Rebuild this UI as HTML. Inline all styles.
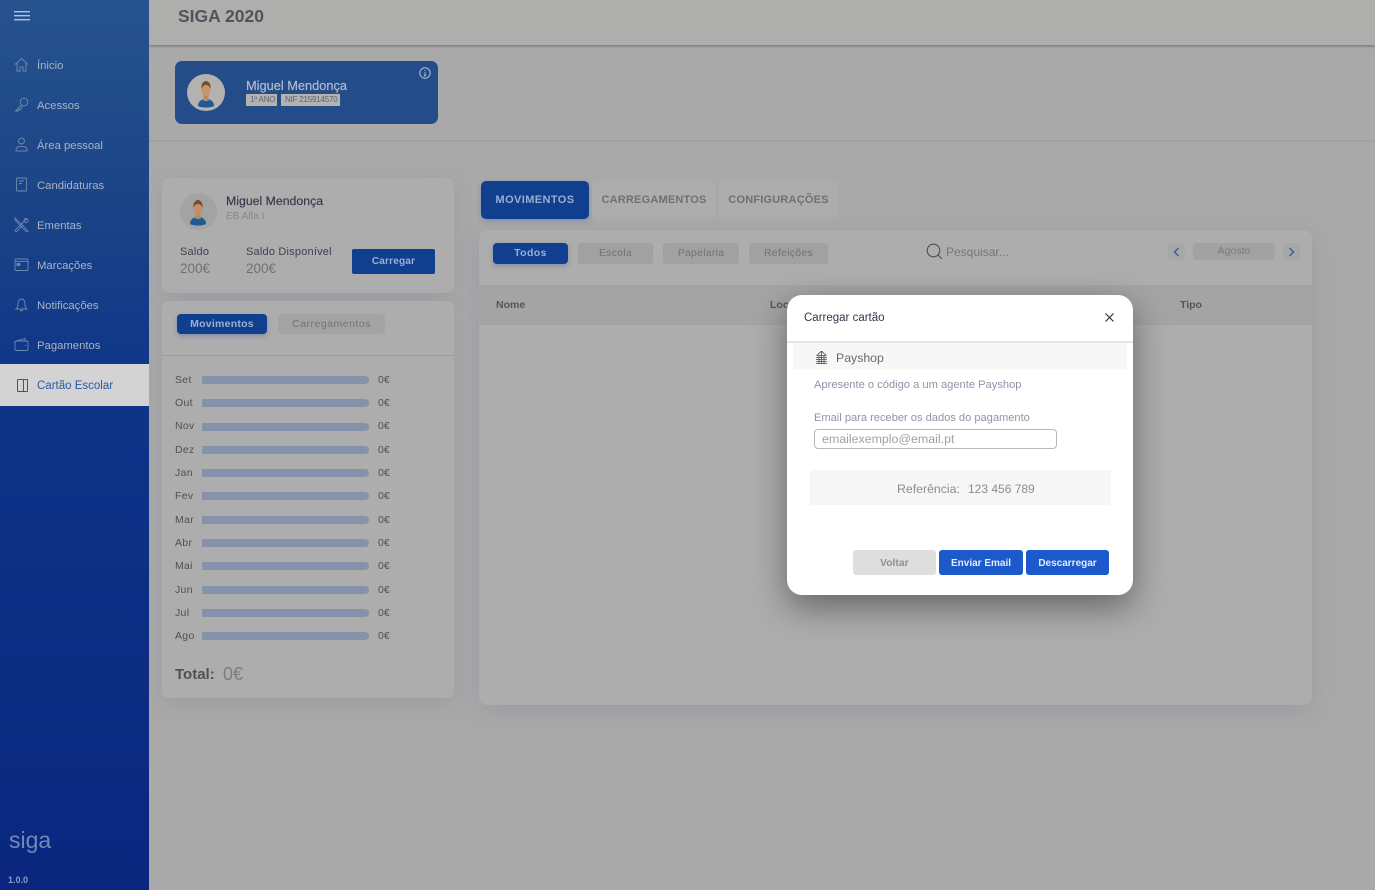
<!DOCTYPE html>
<html lang="pt"><head><meta charset="utf-8"><title>SIGA 2020</title>
<style>
*{box-sizing:border-box}
html,body{margin:0;padding:0;width:1375px;height:890px;overflow:hidden;background:#a9a9aa;font-family:"Liberation Sans",sans-serif}
.a{position:absolute}
.t{position:absolute;white-space:nowrap;line-height:1}
#side{position:absolute;left:0;top:0;width:149px;height:890px;background:linear-gradient(180deg,#26538e 0,#1b4487 200px,#0e3488 400px,#0a267e 890px)}
.mi{position:absolute;left:37px;font-size:11.3px;color:#aab3c5;white-space:nowrap;line-height:14px}
.ic{position:absolute;left:14px;width:15px;height:15px;fill:none;stroke:#7189ad;stroke-width:.9}
.mo{left:175px;font-size:10.5px;color:#4f4f55;letter-spacing:.3px}
.ev{left:378px;font-size:10.5px;color:#4f4f55}
.bar{position:absolute;left:202px;width:167px;height:8px;background:#8691aa;border-radius:0 4px 4px 0}
.pill{position:absolute;height:21px;background:#a1a1a2;border-radius:3px;text-align:center;line-height:20px;font-size:10.5px;color:#727276;letter-spacing:.25px}
</style></head><body>

<div class="a" style="left:149px;top:0;width:1226px;height:45px;background:#aeaead;box-shadow:0 1px 3px rgba(0,0,0,.35)"></div>
<div class="t" style="left:178px;top:8px;font-size:17.5px;font-weight:bold;color:#53535b">SIGA 2020</div>
<div class="a" style="left:149px;top:140px;width:1226px;height:2px;background:#a1a1a2"></div>

<div class="a" style="left:175px;top:61px;width:263px;height:63px;background:#234c88;border-radius:7px"></div>
<div class="a" style="left:187px;top:74px;width:38px;height:37px;border-radius:50%;background:#b4b2ae"></div>
<svg class="a" style="left:187px;top:74px" width="38" height="37" viewBox="0 0 38 37"><path d="M11 32c0-5 4-7 8-7s8 2 8 7c-3 2-13 2-16 0z" fill="#1c5a98"/><rect x="16.5" y="20" width="5" height="7" fill="#b98a66"/><ellipse cx="19" cy="16" rx="4.5" ry="6" fill="#c59572"/><path d="M14.5 15c-1-6 3-8 4.500-8s5.500 2 4.500 8c-1-3-2.500-4-4.500-4s-3.500 1-4.500 4z" fill="#7e4a26"/></svg>
<div class="t" style="left:246px;top:80px;font-size:12.8px;color:#aebbd2;-webkit-text-stroke:.2px #aebbd2">Miguel Mendonça</div>
<div class="a" style="left:246px;top:94px;width:31px;height:12px;background:#b3b3b0"></div>
<div class="t" style="left:250px;top:96px;font-size:8px;color:#5a6078;letter-spacing:-.2px">1º ANO</div>
<div class="a" style="left:281px;top:94px;width:59px;height:12px;background:#b3b3b0"></div>
<div class="t" style="left:285px;top:96px;font-size:8px;color:#5a6078;letter-spacing:-.2px">NIF 215914570</div>
<svg class="a" style="left:419px;top:67px" width="12" height="12" viewBox="0 0 12 12" fill="none" stroke="#b6c2d6"><circle cx="6" cy="6" r="5.2"/><path d="M6 5.2v3.6M4.8 8.8h2.4M6 3v1"/></svg>

<!-- saldo card -->
<div class="a" style="left:162px;top:178px;width:292px;height:115px;background:#adadad;border-radius:7px;box-shadow:0 6px 22px rgba(80,84,110,.14)"></div>
<div class="a" style="left:180px;top:193px;width:37px;height:37px;border-radius:50%;background:#a3a3a3"></div>
<svg class="a" style="left:180px;top:193px" width="37" height="37" viewBox="0 0 37 37"><path d="M10 31c0-5 4-7 8-7s8 2 8 7c-3 2-13 2-16 0z" fill="#1c5a98"/><rect x="15.5" y="20" width="5" height="6" fill="#b98a66"/><ellipse cx="18" cy="16" rx="4.5" ry="6" fill="#c0906c"/><path d="M13.5 15c-1-6 3-8 4.500-8s5.500 2 4.500 8c-1-3-2.500-4-4.500-4s-3.500 1-4.500 4z" fill="#7e4a26"/></svg>
<div class="t" style="left:226px;top:195px;font-size:12.3px;color:#33384c;-webkit-text-stroke:.15px #33384c">Miguel Mendonça</div>
<div class="t" style="left:226px;top:212px;font-size:10px;color:#87878c">EB Alfa I</div>
<div class="t" style="left:180px;top:247px;font-size:11px;color:#3d4050;letter-spacing:.2px">Saldo</div>
<div class="t" style="left:246px;top:247px;font-size:11px;color:#3d4050;letter-spacing:.2px">Saldo Disponível</div>
<div class="t" style="left:180px;top:262px;font-size:13.5px;color:#717175">200€</div>
<div class="t" style="left:246px;top:262px;font-size:13.5px;color:#717175">200€</div>
<div class="a" style="left:352px;top:249px;width:83px;height:25px;background:#103f8f;border-radius:2px;text-align:center;line-height:26px;font-size:10px;font-weight:bold;color:#9fb0cf;letter-spacing:.2px">Carregar</div>

<!-- month card -->
<div class="a" style="left:162px;top:301px;width:292px;height:397px;background:#adadad;border-radius:7px;box-shadow:0 6px 22px rgba(80,84,110,.14)"></div>
<div class="a" style="left:177px;top:314px;width:90px;height:20px;background:#103f8f;border-radius:4px;box-shadow:0 2px 5px rgba(20,70,160,.3);text-align:center;line-height:20px;font-size:10.5px;font-weight:bold;color:#9db0d0;letter-spacing:.25px">Movimentos</div>
<div class="a" style="left:278px;top:314px;width:107px;height:20px;background:#a4a4a5;border-radius:4px;text-align:center;line-height:20px;font-size:10.5px;color:#727276;letter-spacing:.5px">Carregamentos</div>
<div class="a" style="left:162px;top:355px;width:292px;height:1px;background:#9c9c9c"></div>

<div class="t mo" style="top:375px">Set</div><div class="bar" style="top:376px"></div><div class="t ev" style="top:375px">0€</div>
<div class="t mo" style="top:398px">Out</div><div class="bar" style="top:399px"></div><div class="t ev" style="top:398px">0€</div>
<div class="t mo" style="top:421px">Nov</div><div class="bar" style="top:423px"></div><div class="t ev" style="top:421px">0€</div>
<div class="t mo" style="top:445px">Dez</div><div class="bar" style="top:446px"></div><div class="t ev" style="top:445px">0€</div>
<div class="t mo" style="top:468px">Jan</div><div class="bar" style="top:469px"></div><div class="t ev" style="top:468px">0€</div>
<div class="t mo" style="top:491px">Fev</div><div class="bar" style="top:492px"></div><div class="t ev" style="top:491px">0€</div>
<div class="t mo" style="top:515px">Mar</div><div class="bar" style="top:516px"></div><div class="t ev" style="top:515px">0€</div>
<div class="t mo" style="top:538px">Abr</div><div class="bar" style="top:539px"></div><div class="t ev" style="top:538px">0€</div>
<div class="t mo" style="top:561px">Mai</div><div class="bar" style="top:562px"></div><div class="t ev" style="top:561px">0€</div>
<div class="t mo" style="top:585px">Jun</div><div class="bar" style="top:586px"></div><div class="t ev" style="top:585px">0€</div>
<div class="t mo" style="top:608px">Jul</div><div class="bar" style="top:609px"></div><div class="t ev" style="top:608px">0€</div>
<div class="t mo" style="top:631px">Ago</div><div class="bar" style="top:632px"></div><div class="t ev" style="top:631px">0€</div>
<div class="t" style="left:175px;top:667px;font-size:15px;font-weight:bold;color:#505056">Total:</div>
<div class="t" style="left:223px;top:665px;font-size:18px;color:#7c7c80">0€</div>

<!-- tabs -->
<div class="a" style="left:481px;top:181px;width:108px;height:38px;background:#103f8f;border-radius:5px;box-shadow:0 2px 6px rgba(20,70,160,.25);text-align:center;line-height:38px;font-size:11px;font-weight:bold;color:#9cafcf;letter-spacing:.4px">MOVIMENTOS</div>
<div class="a" style="left:592px;top:181px;width:124px;height:38px;background:#adadad;border-radius:5px;text-align:center;line-height:38px;font-size:11px;font-weight:bold;color:#6f6f75;letter-spacing:.2px">CARREGAMENTOS</div>
<div class="a" style="left:719px;top:181px;width:119px;height:38px;background:#adadad;border-radius:5px;text-align:center;line-height:38px;font-size:11px;font-weight:bold;color:#6f6f75;letter-spacing:.2px">CONFIGURAÇÕES</div>

<!-- main panel -->
<div class="a" style="left:479px;top:230px;width:833px;height:475px;background:#adadad;border-radius:8px;box-shadow:0 6px 22px rgba(80,84,110,.16)"></div>
<div class="a" style="left:479px;top:285px;width:833px;height:40px;background:#a4a4a4"></div>
<div class="a" style="left:493px;top:243px;width:75px;height:21px;background:#103f8f;border-radius:4px;box-shadow:0 2px 5px rgba(20,70,160,.3);text-align:center;line-height:20px;font-size:10.5px;font-weight:bold;color:#9db0d0;letter-spacing:.4px">Todos</div>
<div class="pill" style="left:578px;top:243px;width:75px">Escola</div>
<div class="pill" style="left:663px;top:243px;width:76px">Papelaria</div>
<div class="pill" style="left:749px;top:243px;width:79px">Refeições</div>
<svg class="a" style="left:926px;top:243px" width="18" height="18" viewBox="0 0 18 18" fill="none" stroke="#4f4f52" stroke-width="1.1"><circle cx="7.5" cy="7.5" r="6.3"/><path d="M12 12l4 4"/></svg>
<div class="t" style="left:946px;top:246px;font-size:12px;color:#77777b">Pesquisar...</div>
<div class="a" style="left:1168px;top:243px;width:17px;height:17px;background:#a6a7a9;border-radius:3px"></div>
<svg class="a" style="left:1168px;top:243px" width="17" height="17" viewBox="0 0 17 17" fill="none" stroke="#3b5a92" stroke-width="1.4"><path d="M10.5 5l-4 4 4 4"/></svg>
<div class="a" style="left:1193px;top:243px;width:82px;height:17px;background:#a2a2a3;border-radius:3px;text-align:center;line-height:16px;font-size:10.5px;color:#7a7a7f">Agosto</div>
<div class="a" style="left:1283px;top:243px;width:17px;height:17px;background:#a6a7a9;border-radius:3px"></div>
<svg class="a" style="left:1283px;top:243px" width="17" height="17" viewBox="0 0 17 17" fill="none" stroke="#3b5a92" stroke-width="1.4"><path d="M6.5 5l4 4-4 4"/></svg>
<div class="t" style="left:496px;top:300px;font-size:10.5px;font-weight:bold;color:#55555d">Nome</div>
<div class="t" style="left:770px;top:300px;font-size:10.5px;font-weight:bold;color:#55555d">Local</div>
<div class="t" style="left:1180px;top:300px;font-size:10.5px;font-weight:bold;color:#55555d">Tipo</div>

<!-- sidebar -->
<div id="side">
<svg class="a" style="left:14px;top:11px" width="16" height="11" viewBox="0 0 16 11" stroke="#b6c2d6" stroke-width="1.4"><path d="M0 .7h16M0 4.700h16M0 8.700h16"/></svg>
<div class="a" style="left:0;top:44px;width:149px;height:1px;background:#275090"></div>

<svg class="ic" style="top:57px" viewBox="0 0 15 15"><path d="M1 7.5L7.500 1.500 14 7.500M3 6v8h3v-4h3v4h3V6"/></svg>
<div class="mi" style="top:59px">Ínicio</div>
<svg class="ic" style="top:97px" viewBox="0 0 15 15"><circle cx="10" cy="5" r="3.8"/><path d="M7.5 8L1.500 14h2.500l1-1.500 1 .5 2.500-3.500"/></svg>
<div class="mi" style="top:99px">Acessos</div>
<svg class="ic" style="top:137px" viewBox="0 0 15 15"><circle cx="7.5" cy="4" r="3"/><path d="M2 14v-1.500c0-2 2-3 5.500-3s5.500 1 5.500 3V14z"/></svg>
<div class="mi" style="top:139px">Área pessoal</div>
<svg class="ic" style="top:177px" viewBox="0 0 15 15"><rect x="2.5" y="1" width="10" height="13" rx="1"/><path d="M5 4h5M5 6.500h3"/></svg>
<div class="mi" style="top:179px">Candidaturas</div>
<svg class="ic" style="top:217px" viewBox="0 0 15 15"><path d="M1 1l13 13-1.500 1L1 3zM13 1.500L1 13.500 2.500 15 9 8"/><circle cx="12" cy="3.5" r="2"/></svg>
<div class="mi" style="top:219px">Ementas</div>
<svg class="ic" style="top:257px" viewBox="0 0 15 15"><rect x="1" y="2" width="13" height="11.5" rx="1"/><path d="M1 4.500h13"/><rect x="3" y="6.5" width="3" height="2" fill="#7189ad"/></svg>
<div class="mi" style="top:259px">Marcações</div>
<svg class="ic" style="top:297px" viewBox="0 0 15 15"><path d="M2 12h11c-1.500-1-2-2.500-2-5 0-3-1.500-5-3.500-5S4 4 4 7c0 2.500-.5 4-2 5zM6 13.500h3"/></svg>
<div class="mi" style="top:299px">Notificações</div>
<svg class="ic" style="top:337px" viewBox="0 0 15 15"><path d="M2 4l9-2.500V4"/><rect x="1" y="4" width="13" height="9.5" rx="1.5"/><path d="M11 8.500h1"/></svg>
<div class="mi" style="top:339px">Pagamentos</div>
<div class="a" style="left:0;top:364px;width:149px;height:42px;background:#d3d3d3"></div>
<svg class="a" style="left:17px;top:379px" width="11" height="13" viewBox="0 0 11 13" fill="none" stroke="#2a58a8" stroke-width="1"><rect x=".5" y=".5" width="10" height="12" rx=".5"/><path d="M6.500 .5v12"/></svg>
<div class="mi" style="top:379px;color:#2a58a8;font-size:11.5px">Cartão Escolar</div>
<div class="t" style="left:9px;top:829px;font-size:23px;color:#7388b8">siga</div>
<div class="t" style="left:8px;top:876px;font-size:9px;font-weight:bold;color:#8b9cc4">1.0.0</div>
</div>

<!-- modal -->
<div class="a" style="left:787px;top:295px;width:346px;height:300px;background:#fff;border-radius:15px;box-shadow:0 12px 34px rgba(0,0,0,.42)"></div>
<div class="t" style="left:804px;top:313px;font-size:11.5px;color:#343848">Carregar cartão</div>
<svg class="a" style="left:1104px;top:312px" width="11" height="11" viewBox="0 0 11 11" stroke="#2c2c30" stroke-width="1.1"><path d="M1.500 1.500l8 8M9.500 1.500l-8 8"/></svg>
<div class="a" style="left:787px;top:341px;width:346px;height:2px;background:#e4e4e6"></div>
<div class="a" style="left:793px;top:343px;width:334px;height:26px;background:#f7f7f8"></div>
<svg class="a" style="left:815px;top:351px" width="13" height="13" viewBox="0 0 13 13" stroke="#4a4a4e" stroke-width=".8" fill="none"><path d="M6.500 0L2 4.500h9zM1 6.500h11M1 8.500h11M1 10.500h11M1 12.500h11M4 5v8M6.500 0v13M9 5v8"/></svg>
<div class="t" style="left:836px;top:352px;font-size:12.3px;color:#6a6a70">Payshop</div>
<div class="t" style="left:814px;top:380px;font-size:11.15px;color:#8f93a6">Apresente o código a um agente Payshop</div>
<div class="t" style="left:814px;top:413px;font-size:11.1px;color:#8f93a6">Email para receber os dados do pagamento</div>
<div class="a" style="left:814px;top:429px;width:243px;height:20px;border:1px solid #b8b8bc;border-radius:4px;background:#fff"></div>
<div class="t" style="left:822px;top:433px;font-size:12.4px;color:#a0a0a6">emailexemplo@email.pt</div>
<div class="a" style="left:810px;top:470px;width:301px;height:35px;background:#f6f6f7;border-radius:2px"></div>
<div class="t" style="left:897px;top:483px;font-size:12.3px;color:#8c8c94">Referência:</div>
<div class="t" style="left:968px;top:483px;font-size:12px;color:#8c8c94">123 456 789</div>
<div class="a" style="left:853px;top:550px;width:83px;height:25px;background:#dedede;border-radius:3px;text-align:center;line-height:27px;font-size:10px;font-weight:bold;color:#8e8e92;letter-spacing:.2px">Voltar</div>
<div class="a" style="left:939px;top:550px;width:84px;height:25px;background:#1c59cb;border-radius:3px;text-align:center;line-height:27px;font-size:10px;font-weight:bold;color:#e4ebfa">Enviar Email</div>
<div class="a" style="left:1026px;top:550px;width:83px;height:25px;background:#1c59cb;border-radius:3px;text-align:center;line-height:27px;font-size:10px;font-weight:bold;color:#e4ebfa">Descarregar</div>
</body></html>
